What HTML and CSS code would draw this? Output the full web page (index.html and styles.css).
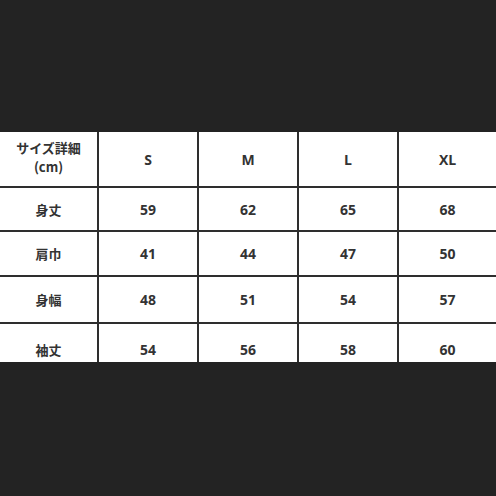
FILE: index.html
```html
<!DOCTYPE html>
<html lang="ja">
<head>
<meta charset="utf-8">
<link rel="stylesheet" href="styles.css">
</head>
<body>
<div class="page">
  <div class="sheet">
    <div class="grid">
      <div class="cell label head"><span>サイズ詳細<br>(cm)</span></div>
      <div class="cell">S</div>
      <div class="cell">M</div>
      <div class="cell">L</div>
      <div class="cell">XL</div>

      <div class="cell label">身丈</div>
      <div class="cell">59</div>
      <div class="cell">62</div>
      <div class="cell">65</div>
      <div class="cell">68</div>

      <div class="cell label">肩巾</div>
      <div class="cell">41</div>
      <div class="cell">44</div>
      <div class="cell">47</div>
      <div class="cell">50</div>

      <div class="cell label">身幅</div>
      <div class="cell">48</div>
      <div class="cell">51</div>
      <div class="cell">54</div>
      <div class="cell">57</div>

      <div class="cell label">袖丈</div>
      <div class="cell">54</div>
      <div class="cell">56</div>
      <div class="cell">58</div>
      <div class="cell">60</div>
    </div>
  </div>
</div>
</body>
</html>
```

FILE: styles.css
```css
html, body {
  margin: 0;
  padding: 0;
  background: #232323;
}
.page {
  width: 496px;
  height: 496px;
  padding-top: 132px;
  box-sizing: border-box;
}
.sheet {
  height: 230px;
  overflow: hidden;
  background: #fff;
}
.grid {
  display: grid;
  grid-template-columns: 97px 98px 98px 98px 97px;
  grid-template-rows: 54px 42px 43px 45px 50px;
  gap: 2px;
  background: #2e2e2e;
}
.cell {
  background: #fff;
  display: flex;
  align-items: center;
  justify-content: center;
  font-family: "Open Sans", "Noto Sans CJK JP", sans-serif;
  font-weight: 700;
  font-size: 14px;
  color: #333;
  text-align: center;
}
.label {
  font-family: "Noto Sans CJK JP", "Noto Sans", sans-serif;
  font-size: 13px;
}
.head span {
  line-height: 19px;
  margin-top: -4px;
}
```
